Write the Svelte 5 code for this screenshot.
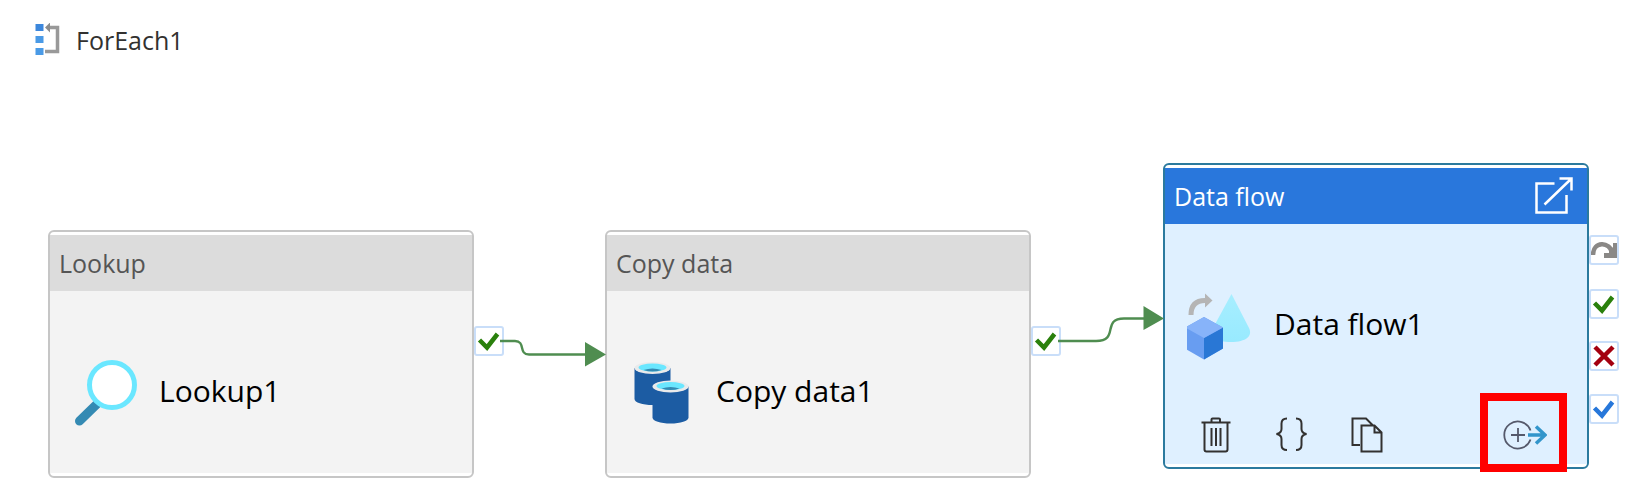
<script>
  const nodes = [
    { type: 'Lookup', name: 'Lookup1', icon: 'lookup', x: 48, y: 230, ports: [{ kind: 'success', y: 94 }] },
    { type: 'Copy data', name: 'Copy data1', icon: 'copy', x: 605, y: 230, ports: [{ kind: 'success', y: 94 }] },
    {
      type: 'Data flow', name: 'Data flow1', icon: 'flow', x: 1163, y: 163, selected: true,
      ports: [
        { kind: 'skip', y: 70 },
        { kind: 'success', y: 124 },
        { kind: 'failure', y: 176 },
        { kind: 'completion', y: 229 }
      ]
    }
  ];
  const labels = { skip: 'Upon skip', success: 'Upon success', failure: 'Upon failure', completion: 'Upon completion' };
</script>

<main>
  <header class="crumb">
    <svg width="26" height="34" viewBox="0 0 26 34" aria-hidden="true">
      <path fill="#3c87dc" d="M.5 1h8v7h-8z" />
      <path fill="#4a9ae6" d="M.5 13h8v7h-8zM.5 25h8v7h-8z" />
      <path d="M14 4.500H22.500V28.500H10" fill="none" stroke="#999" stroke-width="3.500" />
      <path d="M10 4.500l5-5v10z" fill="#8c8c8c" />
    </svg>
    <h1>ForEach1</h1>
  </header>

  <section class="canvas" aria-label="Pipeline activities">
    {#each nodes as node}
      <article class="node" class:selected={node.selected} style="left:{node.x}px; top:{node.y}px">
        <div class="head">
          <span>{node.type}</span>
          {#if node.selected}
            <button aria-label="Open data flow">
              <svg width="38" height="38" viewBox="0 0 38 38" fill="none" stroke="#fff" stroke-width="2.500">
                <path d="M19.500 6.500H1.500V35.500H31.500V18M9.500 27.500L36 2M24.500 1.500H36.500V13.500" />
              </svg>
            </button>
          {/if}
        </div>
        <div class="body">
          <div class="title">
            <svg width="68" height="68" viewBox="0 0 68 68" aria-hidden="true">
              {#if node.icon === 'lookup'}
                <path d="M25 45L7.500 62" stroke="#348ab3" stroke-width="9" stroke-linecap="round" />
                <circle cx="40" cy="26" r="22.500" fill="#fff" stroke="#6ae7ff" stroke-width="5" />
              {:else if node.icon === 'copy'}
                {#each [[5.5, 3], [23.5, 21.5]] as [x, y]}
                  <g transform="translate({x} {y})">
                    <path d="M0 6V37C0 40.500 8 43 18 43S36 40.500 36 37V6z" fill="#1c5ca3" />
                    <ellipse cx="18" cy="6" rx="18" ry="6" fill="#e9eaeb" />
                    <ellipse cx="18" cy="5.500" rx="14" ry="4" fill="#6ae7ff" />
                    <path d="M9 8Q18 5 27 8Q18 11 9 8z" fill="#348ab3" />
                  </g>
                {/each}
              {:else}
                <defs>
                  <linearGradient id="cone" x2="0" y2="1">
                    <stop stop-color="#a7eeff" /><stop offset="1" stop-color="#98eaff" />
                  </linearGradient>
                </defs>
                <g transform="translate(-4 1)">
                  <path d="M48.500 1L66 35C70 43 63 49 48 49S26 43 30 35z" fill="url(#cone)" />
                  <path d="M8 22C8 12 13 7.500 22 7.500" fill="none" stroke="#b5b5b5" stroke-width="5" />
                  <path d="M22 .500L29.500 7.500L22 14.500z" fill="#b5b5b5" />
                  <path d="M21 24L40 34.500V55.500L21 66.500L2 55.500V34.500z" fill="#689df1" />
                  <path d="M40 34.500V55.500L21 66.500V45z" fill="#2977d5" />
                  <path d="M21 24L40 34.500L21 45L2 34.500z" fill="#87b3f9" />
                </g>
              {/if}
            </svg>
            <span>{node.name}</span>
          </div>
          {#if node.selected}
            <div class="tools">
              <button aria-label="Delete">
                <svg width="36" height="36" viewBox="0 0 36 36" fill="none" stroke="#323130" stroke-width="2">
                  <path d="M3.500 5.500H32.500M13.500 5V2.500Q13.500 1.500 14.500 1.500H21Q22 1.500 22 2.500V5M6.500 6V32.500Q6.500 34.500 8.500 34.500H27.500Q29.500 34.500 29.500 32.500V6M13.500 11V29M18 11V29M22.500 11V29" />
                </svg>
              </button>
              <button aria-label="View code">
                <svg width="36" height="36" viewBox="0 0 36 36" fill="none" stroke="#323130" stroke-width="2">
                  <path d="M13 1.500Q7.500 1.500 7.500 6.500V12Q7.500 16 2.500 17Q7.500 18 7.500 22V28Q7.500 33 13 33M22 1.500Q27.500 1.500 27.500 6.500V12Q27.500 16 32.500 17Q27.500 18 27.500 22V28Q27.500 33 22 33" />
                </svg>
              </button>
              <button aria-label="Clone">
                <svg width="36" height="36" viewBox="0 0 36 36" fill="none" stroke="#323130" stroke-width="2">
                  <path d="M10 28H2.500V1.500H16L23 8.500M11.500 8.500H24.500L31.500 15.500V34.500H11.500zM24.500 8.500V15.500H31.500" />
                </svg>
              </button>
              <button class="add" aria-label="Add output">
                <svg width="44" height="36" viewBox="0 0 44 36" fill="none">
                  <path d="M27.500 13.500A13.500 13.500 0 1 0 27.500 22.500M8 18H22M15 11V25" stroke="#55596b" stroke-width="1.800" />
                  <path d="M25 18H42M33 9.500L42 18L33 26.500" stroke="#3295cb" stroke-width="3.500" />
                </svg>
              </button>
            </div>
          {/if}
        </div>

        {#each node.ports as port}
          <button class="port" aria-label={labels[port.kind]} style="top:{port.y}px">
            <svg width="26" height="26" viewBox="0 0 26 26" fill="none">
              {#if port.kind === 'skip'}
                <path d="M2 18C2 4 19 4 21 16" stroke="#8a8886" stroke-width="4.500" />
                <path d="M26 6V21H13V16H18V14L22 10V6z" fill="#8a8886" />
              {:else if port.kind === 'failure'}
                <path d="M4 4L22 22M22 4L4 22" stroke="#a4000f" stroke-width="4.500" />
              {:else}
                <path d="M3.500 12L11 19.500L21.500 6" stroke={port.kind === 'success' ? '#2a800c' : '#2777da'} stroke-width="4.500" />
              {/if}
            </svg>
          </button>
        {/each}
      </article>
    {/each}

    <svg class="edges" width="1644" height="504" viewBox="0 0 1644 504" fill="none" stroke="#4f8d50" stroke-width="2.400" aria-hidden="true">
      <path d="M500 341H515C526 341 518 354.500 529 354.500H586" />
      <path d="M1058 341H1096C1120 341 1101 318.500 1124 318.500H1145" />
      <path d="M585 342L606 354.500L585 366.500zM1143.500 306L1164 318.500L1143.500 330z" fill="#4f8d50" stroke="none" />
    </svg>

    <div class="highlight"></div>
  </section>
</main>

<style>
  :global(body) {
    margin: 0;
    background: #fff;
  }
  main {
    position: relative;
    min-height: 100vh;
    font-family: "Segoe UI", "Open Sans", "Noto Sans", sans-serif;
    color: #111;
  }
  button {
    display: grid;
    place-items: center;
    padding: 0;
    border: 0;
    background: none;
  }
  svg {
    display: block;
    flex: none;
  }
  .crumb {
    display: flex;
    align-items: center;
    gap: 15px;
    padding: 20px 35px;
  }
  h1 {
    margin: 0;
    font-size: 25px;
    font-weight: 400;
    line-height: 40px;
    color: #323130;
  }
  .canvas {
    position: absolute;
    inset: 0;
    pointer-events: none;
  }
  .node {
    position: absolute;
    box-sizing: border-box;
    width: 426px;
    padding: 3px 0;
    border: 2px solid #c6c6c6;
    border-radius: 6px;
    background: #fff;
    pointer-events: auto;
  }
  .head {
    display: flex;
    align-items: center;
    justify-content: space-between;
    height: 56px;
    padding: 0 14px 0 9px;
    background: #dcdcdc;
    color: #555;
    font-size: 25px;
    line-height: 36px;
  }
  .body {
    box-sizing: border-box;
    min-height: 182px;
    padding-top: 68px;
    background: #f3f3f3;
  }
  .title {
    display: flex;
    gap: 19px;
    padding-left: 22px;
    font-size: 30px;
    line-height: 64px;
    color: #000;
  }
  .selected {
    border-color: #2b7a9e;
  }
  .selected .head {
    background: #2977dc;
    color: #fff;
  }
  .selected .body {
    min-height: 240px;
    background: #dff0ff;
  }
  .tools {
    display: flex;
    gap: 40px;
    padding: 57px 40px 0 33px;
  }
  .add {
    margin-left: auto;
  }
  .port {
    position: absolute;
    left: 100%;
    margin-left: 2px;
    border: 2px solid #c9def9;
    border-radius: 3px;
    background: #fff;
  }
  .edges {
    position: absolute;
    inset: 0;
  }
  .highlight {
    position: absolute;
    left: 1480px;
    top: 393px;
    width: 71px;
    height: 63px;
    border: 8px solid #f00;
  }
</style>
